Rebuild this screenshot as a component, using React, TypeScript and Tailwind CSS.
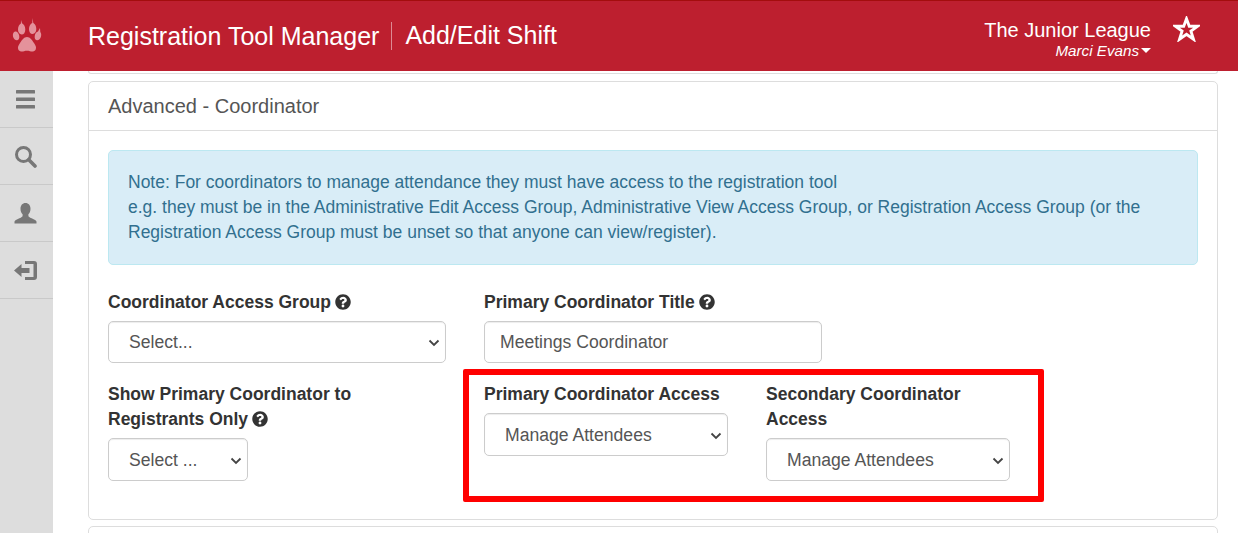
import React from 'react'
import { FaQuestionCircle } from 'react-icons/fa'

const navIcons = [
    <svg key="bars" width="20" height="19" viewBox="0 0 20 19" fill="#777"><rect x="0" y="0" width="19" height="3.6" rx=".6" /><rect x="0" y="7.5" width="19" height="3.6" rx=".6" /><rect x="0" y="15" width="19" height="3.6" rx=".6" /></svg>,
    <svg key="search" width="23" height="23" viewBox="0 0 23 23" fill="none" stroke="#777"><circle cx="9.5" cy="9.5" r="7" strokeWidth="3" /><path d="M14.8 14.8 21 21" strokeWidth="3.6" strokeLinecap="round" /></svg>,
    <svg key="user" width="23" height="23" viewBox="0 0 23 23" fill="#777"><path d="M11.5 1c3 0 5 2.400 5 5.700 0 2.300-.8 4.300-2.100 5.600v1.700c0 .8 1.300 1.400 3.200 2.200 2 .8 4.400 1.800 4.900 3.300v2H.5v-2c.5-1.500 2.900-2.500 4.900-3.300 1.900-.8 3.200-1.400 3.200-2.200v-1.700C7.300 11 6.500 9 6.500 6.700 6.500 3.400 8.500 1 11.500 1z" /></svg>,
    <svg key="exit" width="24" height="21" viewBox="0 0 24 21" fill="#777"><path d="M0 10.500 7.500 4v4h8v5h-8v4z" /><path d="M11 1h9a3 3 0 0 1 3 3v13a3 3 0 0 1-3 3h-9v-3h8.500V4H11z" /></svg>,
]

function Label({ children, help }: { children: React.ReactNode; help?: boolean }) {
    return (
        <label className="block font-bold text-[#333] text-[17.5px] leading-[25px] mb-[6px]">
            {children}
            {help && <FaQuestionCircle className="inline-block ml-[4px] mb-[2px] text-[#333]" size={16} />}
        </label>
    )
}

function Select({ text, className, height }: { text: string; className: string; height: string }) {
    return (
        <div className={`${className} relative`}>
            <select defaultValue={text} className={`${height} block w-full appearance-none bg-white border border-[#ccc] rounded-[5px] pl-[20px] text-[#555] text-[17.6px] shadow-[inset_0_1px_1px_rgba(0,0,0,0.075)]`}>
                <option>{text}</option>
            </select>
            <svg className="absolute right-[6px] top-1/2 -mt-[3px] pointer-events-none" width="12" height="8" viewBox="0 0 12 8" fill="none" stroke="#444" strokeWidth="1.800">
                <path d="M1.500 1.500 6 6 10.500 1.500" />
            </svg>
        </div>
    )
}

export default function App() {
    return (
        <div className="relative h-[533px] w-[1238px] overflow-hidden bg-white font-['Liberation_Sans',Arial,sans-serif]">
            <header className="flex items-center h-[71px] bg-[#bd1f2f] border-t-[1px] border-[#a30d0d] text-white">
                <div className="flex justify-center w-[53px]">
                    <svg width="30" height="36" viewBox="0 0 30 36" fill="#e4929b">
                        <path d="M15 19c3 0 5 3 7 6 1.500 2.300 2.700 4 1.700 6.500-1 2.300-4 2.300-5.700 1.700-1-.4-2-.5-3-.5s-2 .1-3 .5c-1.700.6-4.700.6-5.700-1.700-1-2.500.2-4.200 1.700-6.500 2-3 4-6 7-6z" />
                        <path d="M9 2 10 5.200c1.800.8 3.300 3.200 3.300 6.300 0 3-1.400 5-3.600 5-2.200 0-3.700-2.200-3.700-5 0-2.800 1.200-5 2.900-6z" />
                        <path d="M20.500 0 21.300 5c1.800 1 3 3.200 3 6 0 2.800-1.500 5-3.700 5-2.200 0-3.600-2-3.600-5 0-3 1.500-5.300 3.300-6z" />
                        <path d="M3.200 13.500c1.900-.3 3.500 1.500 4 3.900s-.3 4.500-2 4.800C3.500 22.500 1.500 20.800 1 18.500c-.5-2.400.4-4.700 2.200-5z" />
                        <path d="M28 10 28.300 14c1 1.200 1.100 2.800.7 4.500-.5 2.300-2.500 4-4.200 3.700-1.700-.3-2.500-2.400-2-4.800.4-2 1.800-3.600 3.200-3.900z" />
                    </svg>
                </div>
                <div className="flex items-center ml-[35px] text-[25px]">
                    <span className="pr-[12px] border-r border-[#dd8a93] leading-[28px]">Registration Tool Manager</span>
                    <span className="pl-[13px]">Add/Edit Shift</span>
                </div>
                <div className="ml-auto mr-[87px] pt-[4px] flex flex-col items-end">
                    <div className="text-[20px] leading-[24px]">The Junior League</div>
                    <div className="flex items-center text-[15.2px] italic leading-[17px]">
                        Marci Evans
                        <span className="ml-[2px] w-0 h-0 border-x-[5px] border-x-transparent border-t-[5px] border-t-white" />
                    </div>
                </div>
                <svg className="absolute left-[1173px] top-[16px]" width="27" height="26" viewBox="1.500 1 24 23.500" fill="none" stroke="#fff" strokeWidth="2.600">
                    <path d="M13.500 3.500 16 10.300h7.500l-6 4.400 2.300 7.300-6.300-4.500L7.200 22l2.300-7.300-6-4.400H11z" />
                </svg>
            </header>
            <div className="flex h-[462px]">
                <nav className="w-[53px] shrink-0 bg-[#ddd]">
                    <div className="flex items-center justify-center h-[57px] pr-[2px] border-b border-[#c9c9c9]">{navIcons[0]}</div>
                    <div className="flex items-center justify-center h-[57px] pr-[2px] border-b border-[#c9c9c9]">{navIcons[1]}</div>
                    <div className="flex items-center justify-center h-[57px] pr-[2px] border-b border-[#c9c9c9]">{navIcons[2]}</div>
                    <div className="flex items-center justify-center h-[57px] pr-[2px] border-b border-[#c9c9c9]">{navIcons[3]}</div>
                </nav>
                <main className="flex-1 pl-[35px] pr-[20px]">
                    <div className="h-[3px] border border-t-0 border-[#ddd] rounded-b-[5px]" />
                    <section className="mt-[7px] h-[439px] border border-[#ddd] rounded-[5px]">
                        <h2 className="h-[49px] px-[19px] flex items-center border-b border-[#ddd] text-[#555] text-[20px] font-normal">Advanced - Coordinator</h2>
                        <div className="px-[19px] pt-[19px]">
                            <div className="h-[115px] px-[19px] pt-[19px] bg-[#d9edf7] border border-[#bce8f1] rounded-[5px] text-[#31708f] text-[17.5px] leading-[25px]">
                                Note: For coordinators to manage attendance they must have access to the registration tool<br />
                                e.g. they must be in the Administrative Edit Access Group, Administrative View Access Group, or Registration Access Group (or the Registration Access Group must be unset so that anyone can view/register).
                            </div>
                            <div className="flex gap-[38px] mt-[25px] h-[73px]">
                                <div className="w-[338px]">
                                    <Label help>Coordinator Access Group</Label>
                                    <Select text="Select..." className="w-[338px]" height="h-[42px]" />
                                </div>
                                <div className="w-[338px]">
                                    <Label help>Primary Coordinator Title</Label>
                                    <input defaultValue="Meetings Coordinator" className="block w-[338px] h-[42px] bg-white border border-[#ccc] rounded-[5px] px-[15px] text-[#555] text-[17.6px] shadow-[inset_0_1px_1px_rgba(0,0,0,0.075)]" />
                                </div>
                            </div>
                            <div className="flex gap-[38px] mt-[19px]">
                                <div className="w-[338px]">
                                    <Label help>Show Primary Coordinator to<br />Registrants Only</Label>
                                    <Select text="Select ..." className="w-[140px]" height="h-[43px] pt-[2px]" />
                                </div>
                                <div className="w-[244px]">
                                    <Label>Primary Coordinator Access</Label>
                                    <Select text="Manage Attendees" className="w-[244px]" height="h-[43px] pt-[2px]" />
                                </div>
                                <div className="w-[244px]">
                                    <Label>Secondary Coordinator Access</Label>
                                    <Select text="Manage Attendees" className="w-[244px]" height="h-[43px] pt-[2px]" />
                                </div>
                            </div>
                        </div>
                    </section>
                    <div className="mt-[6px] h-[20px] border border-[#ddd] rounded-t-[5px]" />
                </main>
            </div>
            <div className="absolute left-[463px] top-[369px] w-[581px] h-[133px] border-[6px] border-[#ff0000] rounded-[2px]" />
        </div>
    )
}
